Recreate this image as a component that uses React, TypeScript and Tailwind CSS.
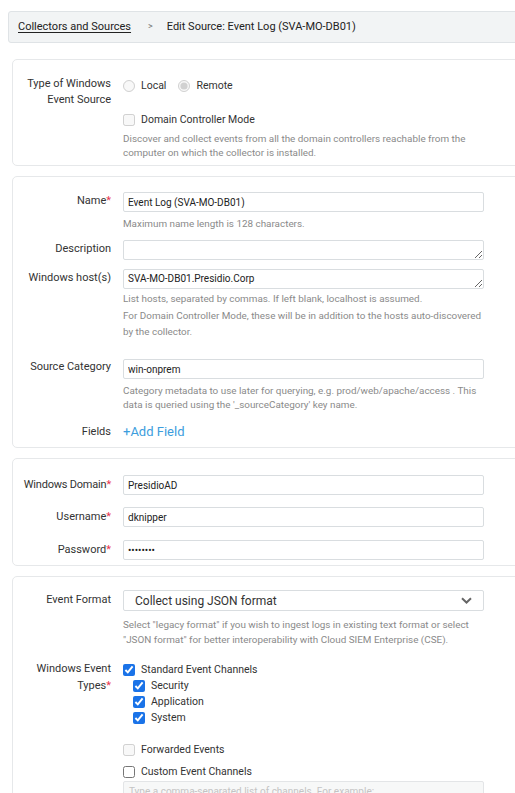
import React from 'react';

const Label: React.FC<{ text: string; req?: boolean; className?: string }> = ({ text, req, className = '' }) => (
  <div className={`w-[90px] shrink-0 text-right text-[11px] leading-[16px] text-[#333] ${className}`}>
    {text}
    {req && <span className="text-[#e8354f]">*</span>}
  </div>
);

const Help: React.FC<{ children: React.ReactNode; className?: string }> = ({ children, className = '' }) => (
  <p className={`text-[9.9px] leading-[14px] text-[#8a8a8a] ${className}`}>{children}</p>
);

const TextInput: React.FC<{ value: string; type?: string }> = ({ value, type = 'text' }) => (
  <input
    readOnly
    type={type}
    value={value}
    className="block h-[20px] w-[361px] rounded-[2px] border border-[#d9dde0] bg-white px-[4px] text-[10px] text-[#222] outline-none"
  />
);

const Area: React.FC<{ value?: string }> = ({ value = '' }) => (
  <textarea
    readOnly
    rows={1}
    value={value}
    className="block h-[20px] w-[361px] overflow-hidden rounded-[2px] border border-[#d9dde0] bg-white px-[4px] py-[2px] text-[10px] leading-[14px] text-[#222] outline-none"
  />
);

const Check: React.FC<{ label: string; checked?: boolean; disabled?: boolean; className?: string }> = ({ label, checked, disabled, className = '' }) => (
  <label className={`flex items-center gap-[6px] text-[10.5px] leading-[16px] text-[#333] ${className}`}>
    <input
      type="checkbox"
      readOnly
      checked={!!checked}
      disabled={disabled}
      className="h-[12px] w-[12px] accent-[#1a73e8]"
    />
    {label}
  </label>
);

const Card: React.FC<{ children: React.ReactNode; className?: string }> = ({ children, className = '' }) => (
  <div className={`ml-[12px] w-[540px] rounded-[5px] border border-[#e6e8ea] bg-white pl-[8px] ${className}`}>
    {children}
  </div>
);

export default function App() {
  return (
    <div className="h-[793px] w-[515px] overflow-hidden bg-white font-['Roboto',sans-serif]">
      <div className="pt-[11px]">
        <div className="ml-[8px] flex h-[32px] w-[540px] items-center rounded-[3px] border border-[#dfe3e6] bg-[#f2f4f5] pl-[9px] text-[11px] text-[#222]">
          <a className="underline underline-offset-2">Collectors and Sources</a>
          <span className="ml-[17px] text-[9px] text-[#777]">&gt;</span>
          <span className="ml-[14px]">Edit Source: Event Log (SVA-MO-DB01)</span>
        </div>
      </div>

      <Card className="mt-[16px] pb-[5px] pt-[16px]">
        <div className="flex gap-[12px]">
          <Label text="Type of Windows Event Source" />
          <div className="w-[361px]">
            <div className="mt-[2px] flex h-[16px] items-center text-[10.5px] text-[#333]">
              <label className="flex items-center gap-[6px]">
                <input type="radio" name="src" readOnly disabled className="h-[12px] w-[12px]" />
                Local
              </label>
              <label className="ml-[12px] flex items-center gap-[6px]">
                <input type="radio" name="src" readOnly checked disabled className="h-[12px] w-[12px]" />
                Remote
              </label>
            </div>
            <Check label="Domain Controller Mode" disabled className="mt-[18px]" />
            <Help className="mt-[4px]">
              Discover and collect events from all the domain controllers reachable from the computer on which the collector is installed.
            </Help>
          </div>
        </div>
      </Card>

      <Card className="mt-[10px] pb-[7px] pt-[15px]">
        <div className="flex gap-[12px]">
          <Label text="Name" req className="pt-[1px]" />
          <div className="w-[361px]">
            <TextInput value="Event Log (SVA-MO-DB01)" />
            <Help className="mt-[5px]">Maximum name length is 128 characters.</Help>
          </div>
        </div>
        <div className="mt-[9px] flex gap-[12px]">
          <Label text="Description" className="pt-[1px]" />
          <Area />
        </div>
        <div className="mt-[9px] flex gap-[12px]">
          <Label text="Windows host(s)" className="pt-[1px]" />
          <div className="w-[361px]">
            <Area value="SVA-MO-DB01.Presidio.Corp" />
            <Help className="mt-[3px]">List hosts, separated by commas. If left blank, localhost is assumed.</Help>
            <Help className="mt-[2px] leading-[16px]">
              For Domain Controller Mode, these will be in addition to the hosts auto-discovered by the collector.
            </Help>
          </div>
        </div>
        <div className="mt-[19px] flex gap-[12px]">
          <Label text="Source Category" />
          <div className="w-[361px]">
            <TextInput value="win-onprem" />
            <Help className="mt-[5px]">
              Category metadata to use later for querying, e.g. prod/web/apache/access . This data is queried using the '_sourceCategory' key name.
            </Help>
          </div>
        </div>
        <div className="mt-[12px] flex items-center gap-[12px]">
          <Label text="Fields" />
          <a className="text-[13px] leading-[16px] text-[#3c9ddd]">+Add Field</a>
        </div>
      </Card>

      <Card className="mt-[10px] pb-[5px] pt-[16px]">
        <div className="flex items-center gap-[12px]">
          <Label text="Windows Domain" req className="whitespace-nowrap tracking-[-0.2px]" />
          <TextInput value="PresidioAD" />
        </div>
        <div className="mt-[12px] flex items-center gap-[12px]">
          <Label text="Username" req />
          <TextInput value="dknipper" />
        </div>
        <div className="mt-[13px] flex items-center gap-[12px]">
          <Label text="Password" req />
          <TextInput type="password" value="password" />
        </div>
      </Card>

      <Card className="mt-[10px] pt-[13px]">
        <div className="flex gap-[12px]">
          <Label text="Event Format" className="pt-[2px]" />
          <div className="w-[361px]">
            <div className="flex h-[21px] items-center justify-between rounded-[2px] border border-[#d9dde0] bg-white pl-[11px] pr-[11px] text-[12px] text-[#333]">
              <span>Collect using JSON format</span>
              <svg width="11" height="7" viewBox="0 0 11 7" fill="none">
                <path d="M1 1.2l4.5 4.3L10 1.2" stroke="#666" strokeWidth="2" />
              </svg>
            </div>
            <Help className="mt-[6px] leading-[15px]">
              Select "legacy format" if you wish to ingest logs in existing text format or select "JSON format" for better interoperability with Cloud SIEM Enterprise (CSE).
            </Help>
          </div>
        </div>
        <div className="mt-[13px] flex gap-[12px]">
          <Label text="Windows Event Types" req className="leading-[17px]" />
          <div className="w-[361px]">
            <Check label="Standard Event Channels" checked className="mt-[2px]" />
            <div className="pl-[10px]">
              <Check label="Security" checked />
              <Check label="Application" checked />
              <Check label="System" checked />
            </div>
            <Check label="Forwarded Events" disabled className="mt-[16px]" />
            <Check label="Custom Event Channels" className="mt-[6px]" />
            <textarea
              disabled
              placeholder="Type a comma-separated list of channels. For example:"
              className="mt-[1px] block h-[60px] w-[361px] rounded-[2px] border border-[#e3e5e7] bg-[#f7f8f8] px-[5px] py-[2px] text-[10px] placeholder:text-[#c4c4c4]"
            />
          </div>
        </div>
      </Card>
    </div>
  );
}
